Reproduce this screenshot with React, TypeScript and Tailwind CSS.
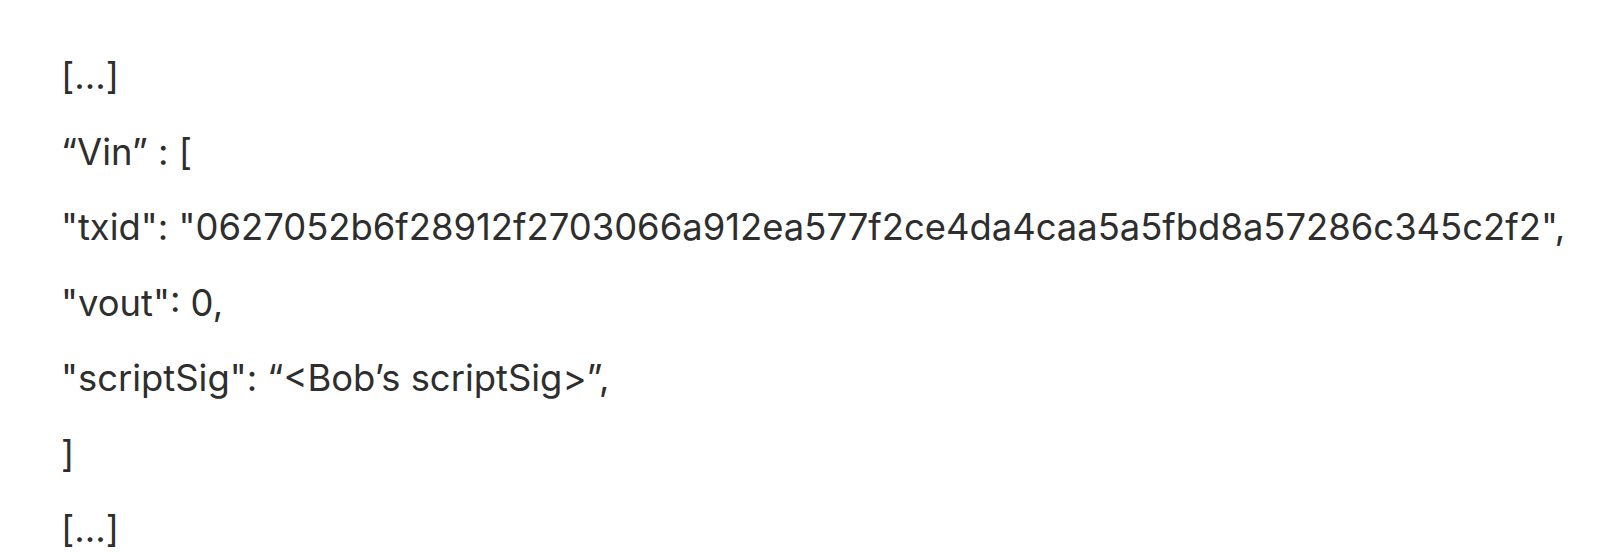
import React from "react";

const lines = [
	"[...]",
	"\u201cVin\u201d : [",
	'"txid": "0627052b6f28912f2703066a912ea577f2ce4da4caa5a5fbd8a57286c345c2f2",',
	'"vout": 0,',
	'"scriptSig": \u201c<Bob\u2019s scriptSig>\u201d,',
	"]",
	"[...]",
];

const App = () => {
	return (
		<div className="w-[1600px] h-[560px] bg-white overflow-hidden pt-[39px] pl-[61px]">
			<div className="flex flex-col font-['Inter',sans-serif] text-[36.4px] leading-[75.5px] text-[#2e2e2e] whitespace-nowrap">
				{lines.map((line, i) => (
					<p key={i}>{line}</p>
				))}
			</div>
		</div>
	);
};

export default App;
